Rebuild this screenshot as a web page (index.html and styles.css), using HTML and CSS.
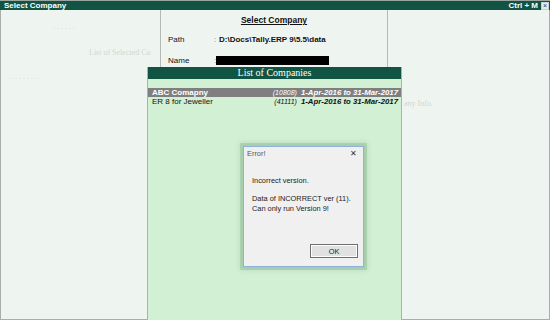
FILE: index.html
```html
<!DOCTYPE html>
<html lang="en">
<head>
<meta charset="UTF-8" />
<title>Select Company</title>
<link rel="stylesheet" href="styles.css">
</head>
<body>

<div class="titlebar">
  <span>Select Company</span>
  <span class="shortcut">Ctrl + M <span class="close-box">&times;</span></span>
</div>

<div class="screen">
  <div class="pane left-pane">
    <div class="ghost ghost-dots">. . . . . .</div>
    <div class="ghost ghost-selected">List of Selected Co</div>
    <div class="ghost ghost-dots2">. . .  . . . .</div>
  </div>

  <div class="pane center-pane">
    <h1>Select Company</h1>
    <div class="field">
      <span class="label">Path</span>
      <span class="colon">:</span>
      <span class="value">D:\Docs\Tally.ERP 9\5.5\data</span>
    </div>
    <div class="field">
      <span class="label">Name</span>
      <span class="colon">:</span>
      <span class="name-box"></span>
    </div>
  </div>

  <div class="pane right-pane">
    <div class="ghost ghost-info">any Info.</div>
  </div>

  <!-- popup list over the panes -->
  <div class="company-list">
    <div class="list-title">List of Companies</div>
    <div class="list-gap"></div>
    <div class="company-row selected">
      <span class="company-name">ABC Comapny</span>
      <span class="company-no">(10808)</span>
      <span class="company-period">1-Apr-2016 to 31-Mar-2017</span>
    </div>
    <div class="company-row">
      <span class="company-name plain">ER 8 for Jeweller</span>
      <span class="company-no">(41111)</span>
      <span class="company-period">1-Apr-2016 to 31-Mar-2017</span>
    </div>
  </div>

  <div class="dialog">
    <div class="dialog-title">
      <span>Error!</span>
      <span class="dialog-x">&#x2715;</span>
    </div>
    <div class="dialog-body">
      <p>Incorrect version.</p>
      <p>Data of INCORRECT ver (11).<br>Can only run Version 9!</p>
    </div>
    <div class="dialog-actions">
      <button class="ok-btn">OK</button>
    </div>
  </div>
</div>

</body>
</html>
```

FILE: styles.css
```css
html, body {
  margin: 0;
  height: 320px;
  overflow: hidden;
}

body {
  font-family: "Liberation Sans", Arial, sans-serif;
  font-size: 8px;
  color: #111;
  background: #eef5f0;
  position: relative;
}

.titlebar {
  height: 9px;
  border-top: 1px solid #9aa59f;
  background: #115443;
  color: #fff;
  font-weight: bold;
  font-size: 8px;
  line-height: 9px;
  display: flex;
  justify-content: space-between;
  padding-left: 4px;
}

.shortcut {
  display: flex;
  align-items: center;
  gap: 3px;
}

.close-box {
  width: 6px;
  height: 6px;
  border: 1px solid #c8d0cc;
  background: #e8ece9;
  color: #333;
  font-size: 7px;
  line-height: 6px;
  text-align: center;
  font-weight: normal;
  margin-right: 1px;
}

.screen {
  height: 309px;
  display: flex;
  border-left: 1px solid #a9aeab;
  border-right: 1px solid #a9aeab;
  border-bottom: 1px solid #a9aeab;
}

.pane {
  position: relative;
}

.left-pane {
  width: 159px;
  border-right: 1px solid #b4b9b6;
}

.center-pane {
  width: 226px;
  border-right: 1px solid #b4b9b6;
}

.right-pane {
  flex: 1;
}

.ghost {
  position: absolute;
  color: #d0d6d2;
  font-family: "Liberation Serif", serif;
  font-size: 8px;
  white-space: nowrap;
}

.ghost-dots { left: 52px; top: 12px; }
.ghost-selected { left: 88px; top: 38px; }
.ghost-dots2 { left: 10px; top: 62px; }
.ghost-info { left: 16px; top: 89px; }

.center-pane h1 {
  margin: 5px 0 0;
  font-size: 8.5px;
  font-weight: bold;
  text-align: center;
  text-decoration: underline;
}

.field {
  display: flex;
  align-items: center;
  height: 10px;
  padding-left: 7px;
}

.field:first-of-type {
  margin-top: 9px;
}

.field + .field {
  margin-top: 11px;
}

.label {
  width: 46px;
}

.colon {
  width: 5px;
  color: #777;
}

.value {
  font-weight: bold;
}

.name-box {
  width: 113px;
  height: 9px;
  background: #000;
  margin-left: -3px;
}

/* List of Companies popup */
.company-list {
  position: absolute;
  left: 147px;
  top: 67px;
  width: 253px;
  bottom: 0;
  background: #d2f0d4;
  border-left: 1px solid #a8b4aa;
  border-right: 1px solid #a8b4aa;
}

.list-title {
  background: #115443;
  color: #fff;
  font-family: "Liberation Serif", serif;
  font-size: 10px;
  height: 12px;
  line-height: 12px;
  text-align: center;
}

.list-gap {
  height: 9px;
}

.company-row {
  display: flex;
  align-items: center;
  height: 9px;
  line-height: 9px;
  padding: 0 3px 0 4px;
  white-space: nowrap;
}

.company-row.selected {
  background: #7f7f7f;
  color: #fff;
}

.company-name {
  flex: 1;
  font-weight: bold;
}

.company-name.plain {
  font-weight: normal;
}

.company-no,
.company-period {
  font-style: italic;
}

.company-no {
  font-size: 7px;
}

.company-period {
  font-size: 7.8px;
  font-weight: bold;
  margin-left: 4px;
}

/* Error dialog */
.dialog {
  position: absolute;
  left: 243px;
  top: 146px;
  width: 119px;
  height: 119px;
  background: #f0f0f0;
  border: 1px solid #8fb3dd;
  box-shadow: 0 0 0 3px rgba(120, 170, 130, 0.3), 0 0 5px 3px rgba(100, 150, 110, 0.25);
  display: flex;
  flex-direction: column;
  font-size: 7.4px;
  color: #222;
}

.dialog-title {
  display: flex;
  justify-content: space-between;
  padding: 2px 6px 0 3px;
  height: 12px;
  color: #555;
}

.dialog-x {
  font-size: 8px;
  color: #333;
}

.dialog-body {
  flex: 1;
  padding: 0 0 0 8px;
}

.dialog-body p {
  margin: 15px 0 0;
  line-height: 10px;
}

.dialog-body p + p {
  margin-top: 8px;
}

.dialog-actions {
  display: flex;
  justify-content: flex-end;
  padding: 0 5px 8px 0;
}

.ok-btn {
  width: 48px;
  height: 14px;
  padding: 0;
  font-family: "Liberation Sans", Arial, sans-serif;
  font-size: 7.4px;
  color: #222;
  background: #e1e1e1;
  border: 1px solid #6f6f6f;
  box-shadow: inset 0 0 0 1px #fdfdfd;
}
```
